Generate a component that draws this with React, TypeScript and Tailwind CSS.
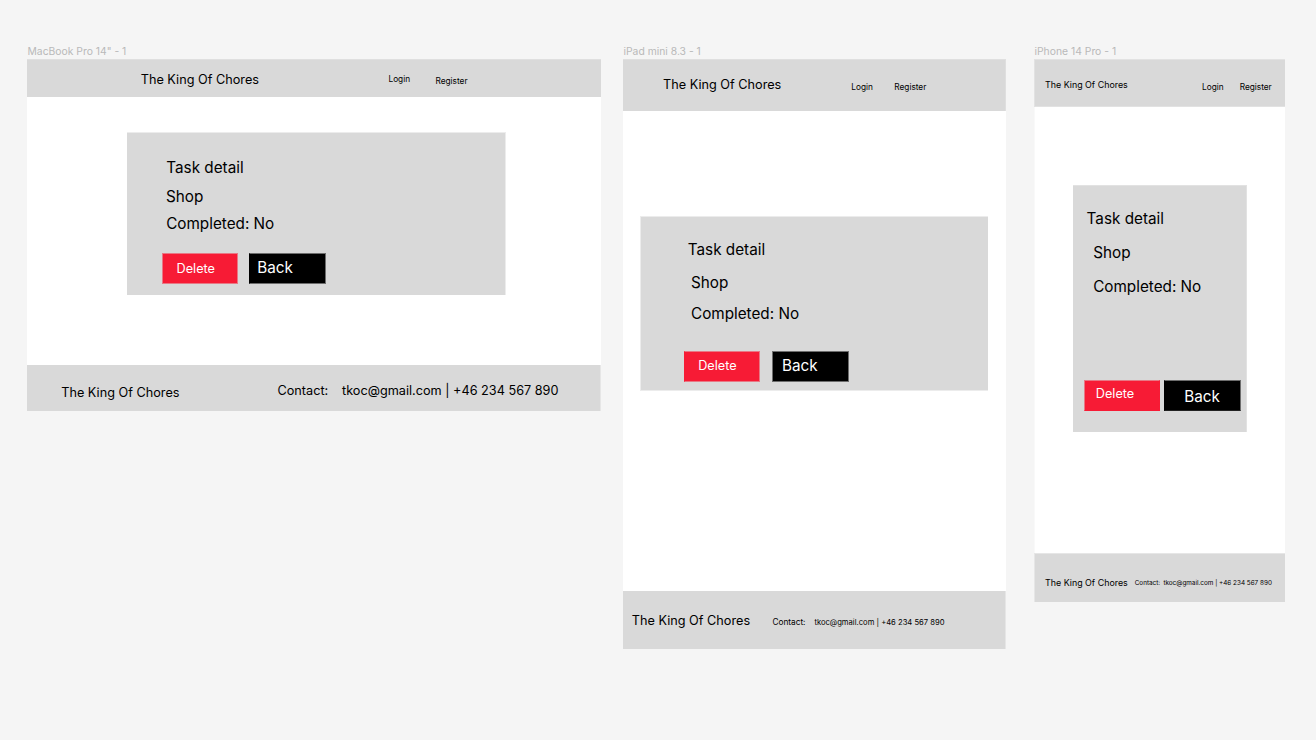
import type { ReactNode } from "react";

const title = "text-[12.7px]";
const heading = "text-[15.27px]";
const small = "text-[8.27px]";

function Text({ className, children }: { className: string; children: ReactNode }) {
  return <div className={`h-5 shrink-0 leading-5 whitespace-pre ${className}`}>{children}</div>;
}

function FrameLabel({ children }: { children: ReactNode }) {
  return <Text className="pl-[0.5px] text-[10.35px] text-[#b9b9b9]">{children}</Text>;
}

function MacBook() {
  return (
    <section className="mt-[41px] ml-[27px] w-[574px] shrink-0">
      <FrameLabel>{'MacBook Pro 14" - 1'}</FrameLabel>
      <div className="-mt-0.5 flex h-[352px] flex-col bg-white">
        <header className="flex h-[38px] border-t border-[#dfdfdf] bg-[#d9d9d9]">
          <Text className={`mt-[10px] ml-[113.7px] w-[247.8px] ${title}`}>The King Of Chores</Text>
          <Text className={`mt-[9px] w-[47px] ${small}`}>Login</Text>
          <Text className={`mt-[11px] ${small}`}>Register</Text>
        </header>
        <main className="flex-1 pt-[35px] pl-[100px]">
          <div className="flex h-[163px] w-[379px] flex-col border-t border-r border-[#ececec] bg-[#d9d9d9] pl-[35px]">
            <Text className={`mt-[25px] ml-[4.3px] ${heading}`}>Task detail</Text>
            <Text className={`mt-[9px] ml-[4px] ${heading}`}>Shop</Text>
            <Text className={`mt-[7px] ml-[4.2px] ${heading}`}>Completed: No</Text>
            <div className="mt-[19px] flex gap-[11px]">
              <button className="flex h-[31px] w-[76px] border border-[#e87885] bg-[#f71b35] text-white">
                <Text className={`mt-[5px] ml-[13.5px] ${title}`}>Delete</Text>
              </button>
              <button className="flex h-[31px] w-[77px] border border-l-black border-[#6d6d6d] bg-black text-white">
                <Text className={`mt-[4px] ml-[7.3px] ${heading}`}>Back</Text>
              </button>
            </div>
          </div>
        </main>
        <footer className="flex h-[46px] w-[574px] border-r border-[#e6e6e6] bg-[#d9d9d9]">
          <Text className={`mt-[18px] ml-[34.2px] w-[216.3px] ${title}`}>The King Of Chores</Text>
          <Text className={`mt-[16px] w-[64.5px] ${title}`}>Contact:</Text>
          <Text className={`mt-[16px] ${title}`}>tkoc@gmail.com | +46 234 567 890</Text>
        </footer>
      </div>
    </section>
  );
}

function IPad() {
  return (
    <section className="mt-[41px] ml-[22px] w-[383px] shrink-0">
      <FrameLabel>iPad mini 8.3 - 1</FrameLabel>
      <div className="-mt-0.5 flex h-[590px] flex-col bg-white">
        <header className="flex h-[52px] border-t border-r border-[#dfdfdf] bg-[#d9d9d9]">
          <Text className={`mt-[15px] ml-[40px] w-[188.3px] ${title}`}>The King Of Chores</Text>
          <Text className={`mt-[17px] w-[43px] ${small}`}>Login</Text>
          <Text className={`mt-[17px] ${small}`}>Register</Text>
        </header>
        <main className="flex-1 pt-[105px] pl-[17px]">
          <div className="flex h-[175px] w-[348px] flex-col border-y border-l border-[#ececec] bg-[#d9d9d9] pl-[43px]">
            <Text className={`mt-[23px] ml-[3.8px] ${heading}`}>Task detail</Text>
            <Text className={`mt-[13px] ml-[7px] ${heading}`}>Shop</Text>
            <Text className={`mt-[11px] ml-[7px] ${heading}`}>Completed: No</Text>
            <div className="mt-[27px] flex gap-[12px]">
              <button className="flex h-[31px] w-[76px] border border-l-[#f71b35] border-[#e87885] bg-[#f71b35] text-white">
                <Text className={`mt-[4px] ml-[13.2px] ${title}`}>Delete</Text>
              </button>
              <button className="flex h-[31px] w-[77px] border border-[#6d6d6d] bg-black text-white">
                <Text className={`mt-[4px] ml-[9px] ${heading}`}>Back</Text>
              </button>
            </div>
          </div>
        </main>
        <footer className="flex h-[58px] border-r border-[#e6e6e6] bg-[#d9d9d9]">
          <Text className={`mt-[20px] ml-[8.8px] w-[140.6px] ${title}`}>The King Of Chores</Text>
          <Text className={`mt-[21px] w-[42px] ${small}`}>Contact:</Text>
          <Text className="mt-[22px] text-[7.64px]">tkoc@gmail.com | +46 234 567 890</Text>
        </footer>
      </div>
    </section>
  );
}

function IPhone() {
  return (
    <section className="mt-[41px] ml-[28px] w-[251px] shrink-0">
      <FrameLabel>iPhone 14 Pro - 1</FrameLabel>
      <div className="-mt-0.5 flex h-[543px] flex-col border-l border-[#f9f9f9] bg-white">
        <header className="-ml-px flex h-[48px] border border-r-0 border-[#e2e2e2] bg-[#d9d9d9]">
          <Text className="mt-[15px] ml-[10px] w-[157px] text-[8.88px]">The King Of Chores</Text>
          <Text className={`mt-[17px] w-[37.7px] ${small}`}>Login</Text>
          <Text className={`mt-[17px] ${small}`}>Register</Text>
        </header>
        <main className="flex-1 pt-[78px] pl-[38px]">
          <div className="flex h-[247px] w-[174px] flex-col border-t border-r border-[#e2e2e2] bg-[#d9d9d9] pl-[11px]">
            <Text className={`mt-[23px] ml-[2.6px] ${heading}`}>Task detail</Text>
            <Text className={`mt-[14px] ml-[9.2px] ${heading}`}>Shop</Text>
            <Text className={`mt-[14px] ml-[9.2px] ${heading}`}>Completed: No</Text>
            <div className="mt-[83px] flex gap-[4px]">
              <button className="flex h-[31px] w-[76px] border border-r-[#f71b35] border-b-[#f71b35] border-[#e87885] bg-[#f71b35] text-white">
                <Text className={`mt-[3px] ml-[10.8px] ${title}`}>Delete</Text>
              </button>
              <button className="flex h-[31px] w-[77px] border border-l-black border-b-[#222] border-[#6d6d6d] bg-black text-white">
                <Text className={`mt-[6px] ml-[19.2px] ${heading}`}>Back</Text>
              </button>
            </div>
          </div>
        </main>
        <footer className="-ml-px flex h-[49px] border-t border-l border-[#e6e6e6] bg-[#d9d9d9]">
          <Text className="mt-[19px] ml-[10px] w-[89.7px] text-[8.88px]">The King Of Chores</Text>
          <Text className="mt-[19px] w-[28.7px] text-[6.36px]">Contact:</Text>
          <Text className="mt-[19px] text-[6.36px]">tkoc@gmail.com | +46 234 567 890</Text>
        </footer>
      </div>
    </section>
  );
}

export default function App() {
  return (
    <div className="flex h-[740px] w-[1316px] items-start overflow-hidden bg-[#f5f5f5] font-['Inter',sans-serif] text-black">
      <MacBook />
      <IPad />
      <IPhone />
    </div>
  );
}
